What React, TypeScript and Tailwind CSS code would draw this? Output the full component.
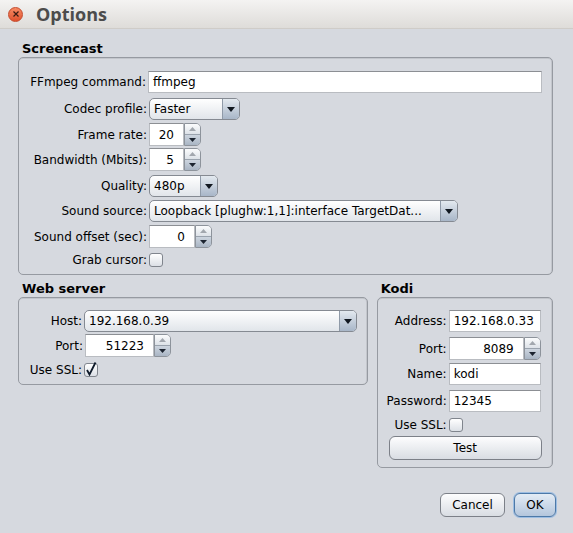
import React from "react";

const font = { fontFamily: '"DejaVu Sans", "Liberation Sans", sans-serif' };

// --- Controles estilo Nimbus ---

const TextField = ({ value, width }: { value: string; width: string }) => (
  <div
    className={`${width} h-[22px] bg-white border border-[#b9bcc1] border-t-[#8c8f94] flex items-center pl-[4px] text-black whitespace-nowrap overflow-hidden`}
  >
    {value}
  </div>
);

const Spinner = ({ value, width }: { value: string; width: string }) => (
  <div className="flex h-[23px]">
    <div
      className={`${width} h-full bg-white border border-[#b9bcc1] border-t-[#8c8f94] flex items-center justify-end pr-[9px] text-black`}
    >
      {value}
    </div>
    <div className="w-[17px] h-full flex flex-col border border-[#8d939b] rounded-r-[5px] overflow-hidden">
      <div className="flex-1 bg-gradient-to-b from-[#fbfcfd] to-[#dde2e8] flex items-center justify-center border-b border-[#9aa3ae]">
        <svg width="7" height="4" viewBox="0 0 7 4">
          <path d="M3.5 0 L7 4 L0 4 Z" fill="#a2a7ae" />
        </svg>
      </div>
      <div className="flex-1 bg-gradient-to-b from-[#cdd5df] to-[#a9b5c4] flex items-center justify-center">
        <svg width="7" height="4" viewBox="0 0 7 4">
          <path d="M0 0 L7 0 L3.5 4 Z" fill="#1c2430" />
        </svg>
      </div>
    </div>
  </div>
);

const Combo = ({ value, width }: { value: string; width: string }) => (
  <div
    className={`${width} h-[22px] flex rounded-[5px] border border-[#858a92] overflow-hidden bg-gradient-to-b from-[#ffffff] to-[#e1e5ea]`}
  >
    <div className="flex-1 flex items-center pl-[4px] text-black whitespace-nowrap overflow-hidden">{value}</div>
    <div className="w-[17px] h-full flex items-center justify-center border-l border-[#8f9aa8] bg-gradient-to-b from-[#e3e9ef] to-[#a8b6c8]">
      <svg width="8" height="5" viewBox="0 0 8 5">
        <path d="M0 0 L8 0 L4 5 Z" fill="#111820" />
      </svg>
    </div>
  </div>
);

const CheckBox = ({ checked = false }: { checked?: boolean }) => (
  <div className="w-[14px] h-[14px] rounded-[3px] border border-[#80858d] bg-gradient-to-b from-[#ffffff] to-[#dce0e6] flex items-center justify-center">
    {checked && (
      <svg width="12" height="14" viewBox="0 0 12 14" className="-mt-[3px]">
        <path d="M2 8 L4.5 12.5 L10.5 0.5" stroke="#0e1a2a" strokeWidth="1.8" fill="none" />
      </svg>
    )}
  </div>
);

const Button = ({ label, width, focused = false }: { label: string; width: string; focused?: boolean }) => (
  <div
    className={`${width} h-[24px] rounded-[6px] border flex items-center justify-center text-black ${
      focused
        ? "border-[#4d79a8] bg-gradient-to-b from-[#e4ecf5] to-[#b4c6dc] shadow-[0_0_0_1px_#9cbde2]"
        : "border-[#7c8088] bg-gradient-to-b from-[#fdfdfe] to-[#d9dde3]"
    }`}
  >
    {label}
  </div>
);

// fila: etiqueta alineada a la derecha + control
const Row = ({
  label,
  labelW,
  mt,
  children,
}: {
  label: string;
  labelW: string;
  mt: string;
  children: React.ReactNode;
}) => (
  <div className={`flex items-center ${mt}`}>
    <div className={`${labelW} text-right pr-[2px] text-black whitespace-nowrap`}>{label}</div>
    {children}
  </div>
);

const Panel = ({ className, children }: { className: string; children: React.ReactNode }) => (
  <div
    className={`border border-[#969aa1] rounded-[5px] shadow-[inset_0_1px_0_#c3c6cc,inset_-1px_0_0_#c3c6cc] ${className}`}
  >
    {children}
  </div>
);

const Heading = ({ text }: { text: string }) => (
  <div className="h-[16px] leading-[16px] pl-[4px] text-[13px] font-bold text-black">{text}</div>
);

export default function App() {
  return (
    <div className="w-[573px] h-[533px] bg-[#d6d9df] text-[12px] overflow-hidden" style={font}>
      {/* Barra de título */}
      <div className="h-[29px] flex items-center bg-gradient-to-b from-[#f4f3f2] to-[#dedcd9] border-b border-[#cfccc8]">
        <div className="ml-[8px] w-[15px] h-[15px] rounded-full bg-gradient-to-b from-[#f78a63] to-[#e0502c] border border-[#c4492b] flex items-center justify-center">
          <svg width="6" height="6" viewBox="0 0 6 6">
            <path d="M0.5 0.5 L5.5 5.5 M5.5 0.5 L0.5 5.5" stroke="#3a1b12" strokeWidth="1.2" />
          </svg>
        </div>
        <div
          className="ml-[13px] text-[18px] font-bold text-[#4c4c4c]"
          style={{ fontFamily: '"Open Sans", "DejaVu Sans", sans-serif' }}
        >
          Options
        </div>
      </div>

      <div className="pl-[18px] pr-[20px] pt-[12px]">
        {/* Screencast */}
        <Heading text="Screencast" />
        <Panel className="h-[218px]">
          <Row label="FFmpeg command:" labelW="w-[129px]" mt="mt-[13px]">
            <TextField value="ffmpeg" width="w-[394px]" />
          </Row>
          <Row label="Codec profile:" labelW="w-[130px]" mt="mt-[5px]">
            <Combo value="Faster" width="w-[91px]" />
          </Row>
          <Row label="Frame rate:" labelW="w-[130px]" mt="mt-[3px]">
            <Spinner value="20" width="w-[35px]" />
          </Row>
          <Row label="Bandwidth (Mbits):" labelW="w-[130px]" mt="mt-[2px]">
            <Spinner value="5" width="w-[35px]" />
          </Row>
          <Row label="Quality:" labelW="w-[130px]" mt="mt-[4px]">
            <Combo value="480p" width="w-[69px]" />
          </Row>
          <Row label="Sound source:" labelW="w-[130px]" mt="mt-[3px]">
            <Combo value="Loopback [plughw:1,1]:interface TargetDat..." width="w-[309px]" />
          </Row>
          <Row label="Sound offset (sec):" labelW="w-[130px]" mt="mt-[3px]">
            <Spinner value="0" width="w-[46px]" />
          </Row>
          <Row label="Grab cursor:" labelW="w-[130px]" mt="mt-[3px]">
            <CheckBox />
          </Row>
        </Panel>

        <div className="flex gap-[9px] mt-[6px]">
          {/* Web server */}
          <div className="w-[351px]">
            <Heading text="Web server" />
            <Panel className="h-[88px]">
              <Row label="Host:" labelW="w-[65px]" mt="mt-[12px]">
                <Combo value="192.168.0.39" width="w-[273px]" />
              </Row>
              <Row label="Port:" labelW="w-[66px]" mt="mt-[2px]">
                <Spinner value="51223" width="w-[69px]" />
              </Row>
              <Row label="Use SSL:" labelW="w-[65px]" mt="mt-[4px]">
                <CheckBox checked />
              </Row>
            </Panel>
          </div>

          {/* Kodi */}
          <div className="w-[177px]">
            <Heading text="Kodi" />
            <Panel className="h-[171px]">
              <Row label="Address:" labelW="w-[71px]" mt="mt-[12px]">
                <TextField value="192.168.0.33" width="w-[92px]" />
              </Row>
              <Row label="Port:" labelW="w-[71px]" mt="mt-[5px]">
                <Spinner value="8089" width="w-[75px]" />
              </Row>
              <Row label="Name:" labelW="w-[71px]" mt="mt-[3px]">
                <TextField value="kodi" width="w-[92px]" />
              </Row>
              <Row label="Password:" labelW="w-[71px]" mt="mt-[5px]">
                <TextField value="12345" width="w-[92px]" />
              </Row>
              <Row label="Use SSL:" labelW="w-[71px]" mt="mt-[4px]">
                <CheckBox />
              </Row>
              <div className="pl-[11px] mt-[2px]">
                <Button label="Test" width="w-[153px]" />
              </div>
            </Panel>
          </div>
        </div>

        {/* Botones */}
        <div className="flex justify-end gap-[9px] mt-[25px] mr-[-3px]">
          <Button label="Cancel" width="w-[65px]" />
          <Button label="OK" width="w-[42px]" focused />
        </div>
      </div>
    </div>
  );
}
